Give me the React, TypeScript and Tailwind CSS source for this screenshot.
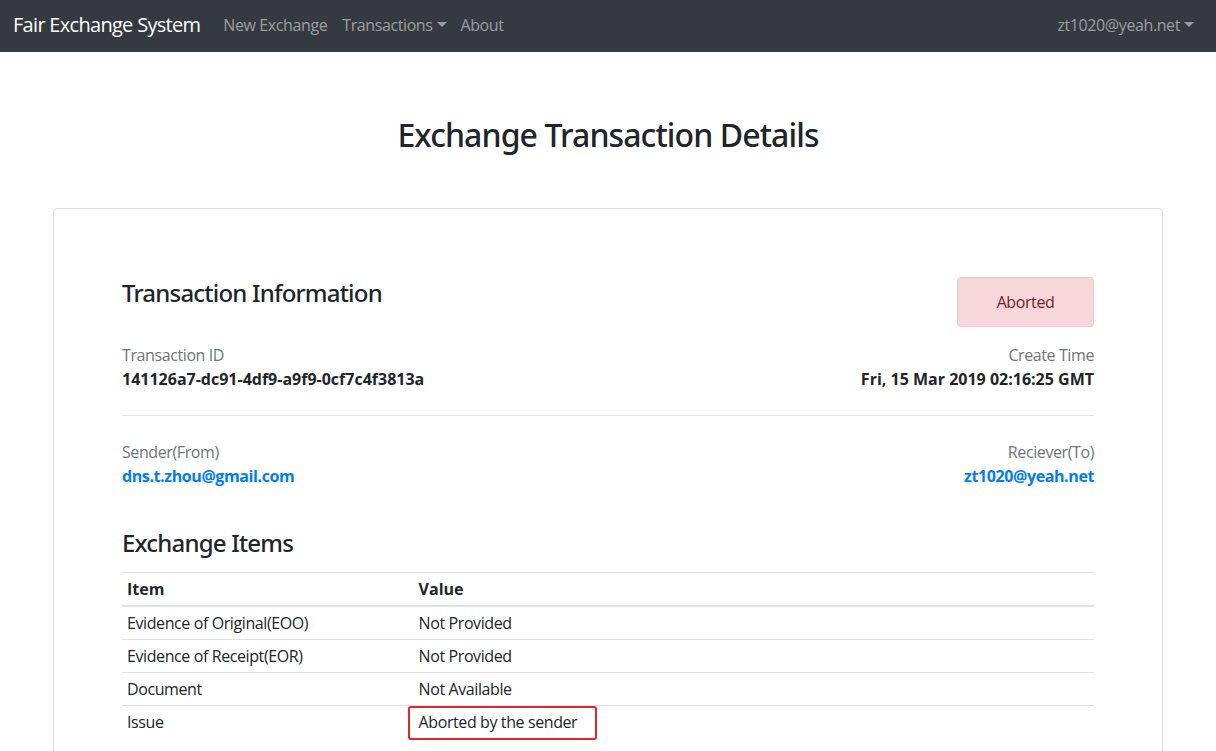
import React from "react";

const Caret = () => (
  <svg width="10" height="5" viewBox="0 0 10 5" className="ml-[4px] inline-block">
    <polygon points="0,0 10,0 5,5" fill="currentColor" />
  </svg>
);

const rows = [
  { item: "Evidence of Original(EOO)", value: "Not Provided" },
  { item: "Evidence of Receipt(EOR)", value: "Not Provided" },
  { item: "Document", value: "Not Available" },
];

const App = () => {
  return (
    <div
      className="min-h-[751px] bg-white text-[#212529] text-[16px] leading-[24px] tracking-[-0.4px]"
      style={{ fontFamily: '"Open Sans", "Noto Sans", sans-serif' }}
    >
      {/* navbar */}
      <nav className="h-[52px] bg-[#343a40] flex items-center justify-between pl-[13px] pr-[22px] pb-[3px]">
        <div className="flex items-center">
          <span className="text-[20px] text-white mr-[15px] tracking-[-0.7px]">Fair Exchange System</span>
          <a className="px-[8px] text-[#ffffff80]">New Exchange</a>
          <a className="px-[7px] text-[#ffffff80] flex items-center">
            Transactions
            <Caret />
          </a>
          <a className="px-[7px] text-[#ffffff80]">About</a>
        </div>
        <a className="text-[#ffffff80] flex items-center">
          zt1020@yeah.net
          <Caret />
        </a>
      </nav>

      <h2
        className="text-center text-[32px] leading-[38px] font-medium tracking-[-0.9px] mt-[64px] mb-[54px]"
        style={{ fontFamily: '"Noto Sans", "Open Sans", sans-serif' }}
      >
        Exchange Transaction Details
      </h2>

      <div className="max-w-[1110px] mx-auto border border-[#0000001f] rounded-[4px] px-[68px] pt-[68px] pb-[40px]">
        <div className="flex justify-between items-start">
          <h4
            className="text-[24px] leading-[29px] font-medium tracking-[-0.8px] mt-[1px]"
            style={{ fontFamily: '"Noto Sans", "Open Sans", sans-serif' }}
          >
            Transaction Information
          </h4>
          <div className="w-[137px] h-[50px] flex items-center justify-center bg-[#f8d7da] border border-[#f5c6cb] text-[#721c24] rounded-[4px]">
            Aborted
          </div>
        </div>

        <div className="flex justify-between mt-[16px]">
          <div>
            <div className="text-[#6c757d]">Transaction ID</div>
            <div className="font-bold tracking-normal">141126a7-dc91-4df9-a9f9-0cf7c4f3813a</div>
          </div>
          <div className="text-right">
            <div className="text-[#6c757d]">Create Time</div>
            <div className="font-bold tracking-normal">Fri, 15 Mar 2019 02:16:25 GMT</div>
          </div>
        </div>

        <hr className="my-[24px] border-t border-[#0000001a]" />

        <div className="flex justify-between">
          <div>
            <div className="text-[#6c757d]">Sender(From)</div>
            <a className="font-bold text-[#007bff]">dns.t.zhou@gmail.com</a>
          </div>
          <div className="text-right">
            <div className="text-[#6c757d]">Reciever(To)</div>
            <a className="font-bold text-[#007bff]">zt1020@yeah.net</a>
          </div>
        </div>

        <h4
          className="text-[24px] leading-[29px] font-medium tracking-[-0.8px] mt-[40px] mb-[15px]"
          style={{ fontFamily: '"Noto Sans", "Open Sans", sans-serif' }}
        >
          Exchange Items
        </h4>

        <table className="w-full border-collapse">
          <thead>
            <tr className="border-t border-[#dee2e6] border-b-2">
              <th className="w-[30%] text-left font-bold tracking-normal px-[5px] py-[4px]">Item</th>
              <th className="text-left font-bold tracking-normal px-[5px] py-[4px]">Value</th>
            </tr>
          </thead>
          <tbody>
            {rows.map((r) => (
              <tr key={r.item} className="border-t border-[#dee2e6]">
                <td className="px-[5px] py-[4px]">{r.item}</td>
                <td className="px-[5px] py-[4px]">{r.value}</td>
              </tr>
            ))}
            <tr className="border-t border-[#dee2e6]">
              <td className="px-[5px] py-[4px]">Issue</td>
              <td className="px-[5px] py-[4px] relative">
                Aborted by the sender
                <div className="absolute left-[-6px] top-0 w-[189px] h-[34px] border-2 border-[#e3262b] rounded-[3px]" />
              </td>
            </tr>
          </tbody>
        </table>
      </div>
    </div>
  );
};

export default App;
